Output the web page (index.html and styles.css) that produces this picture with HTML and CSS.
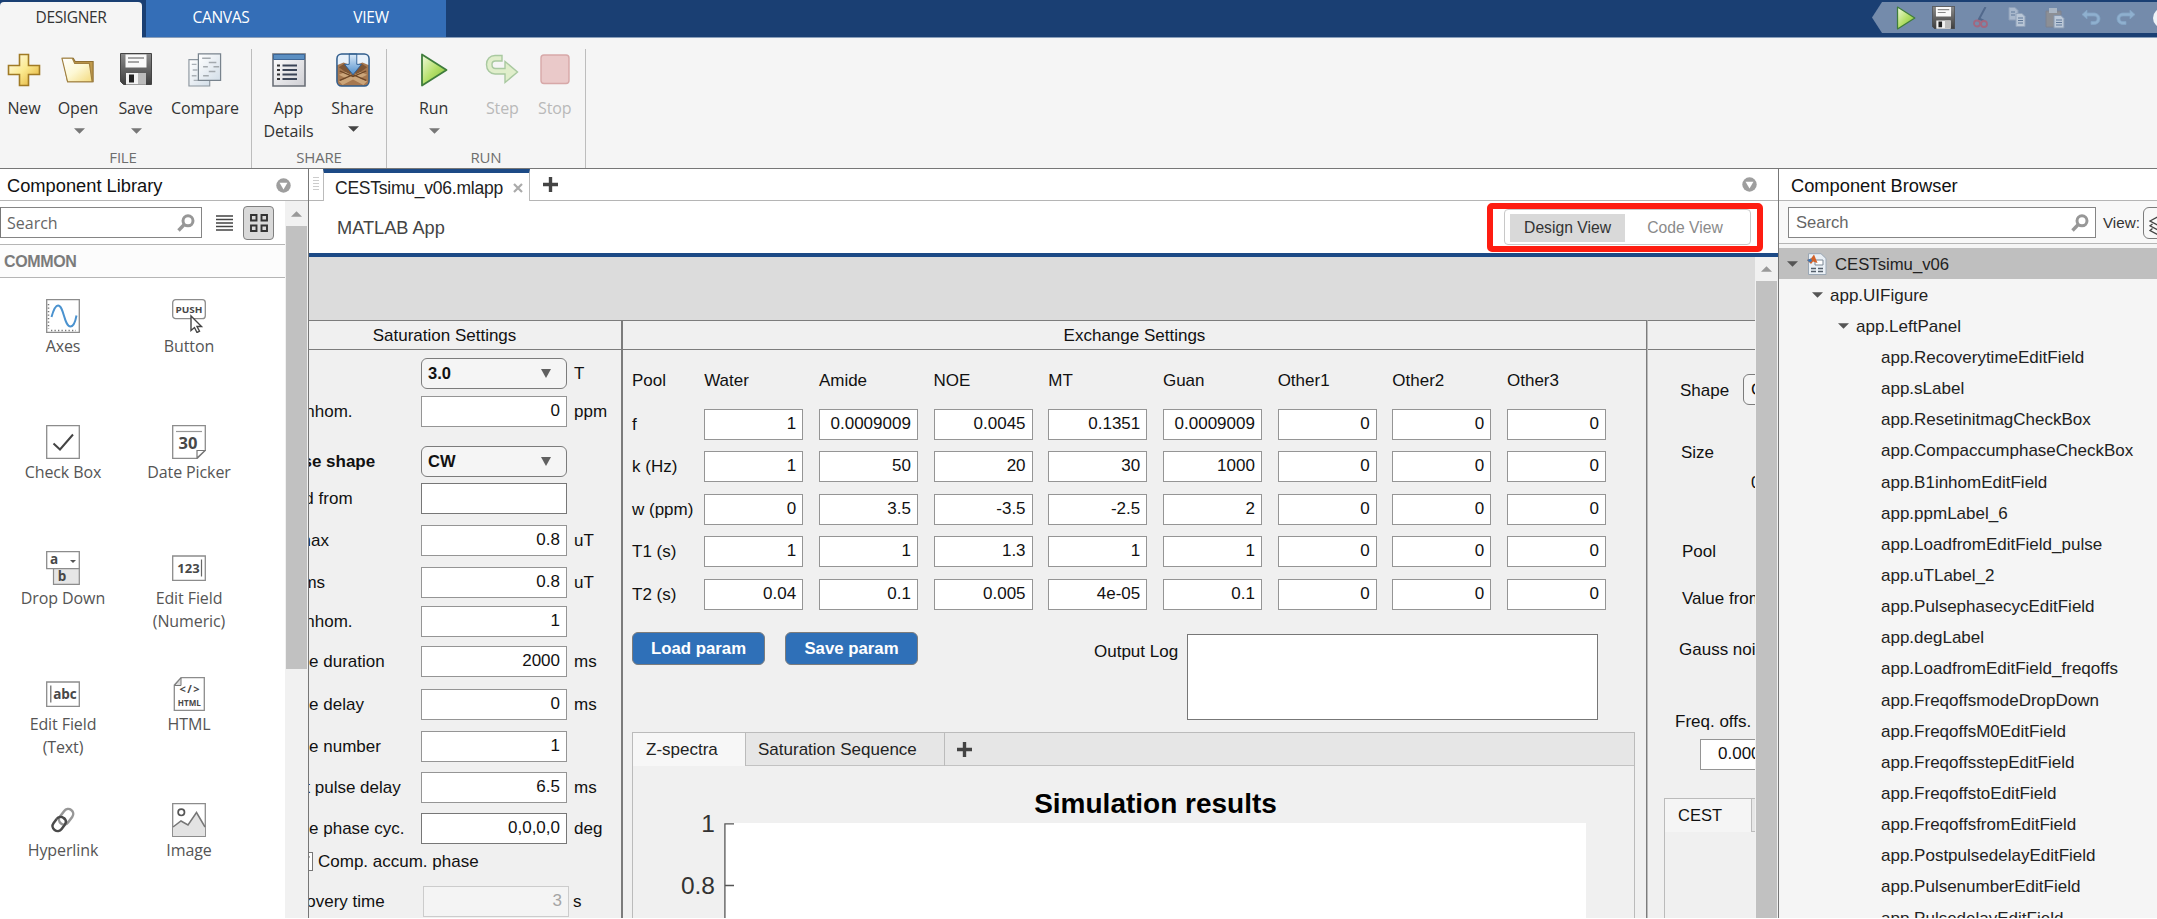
FILE: index.html
```html
<!DOCTYPE html>
<html lang="en">
<head>
<meta charset="utf-8">
<title>App Designer</title>
<link rel="stylesheet" href="styles.css">
</head>
<body>
<svg class="defs" width="0" height="0">
  <defs>
    <linearGradient id="gold" x1="0" y1="0" x2="1" y2="1"><stop offset="0" stop-color="#fffdf0"/><stop offset=".5" stop-color="#fbe98e"/><stop offset="1" stop-color="#dfa92c"/></linearGradient>
    <linearGradient id="folder" x1="0" y1="0" x2="1" y2="1"><stop offset="0" stop-color="#ffffff"/><stop offset=".5" stop-color="#fdf8d4"/><stop offset="1" stop-color="#f3d97c"/></linearGradient>
    <linearGradient id="steel" x1="0" y1="0" x2="0" y2="1"><stop offset="0" stop-color="#8b8b8b"/><stop offset="1" stop-color="#3e3e3e"/></linearGradient>
    <linearGradient id="green" x1="0" y1="0" x2="1" y2="1"><stop offset="0" stop-color="#f2fadf"/><stop offset=".5" stop-color="#b5e06b"/><stop offset="1" stop-color="#7dbb30"/></linearGradient>
    <linearGradient id="paper" x1="0" y1="0" x2="1" y2="1"><stop offset="0" stop-color="#ffffff"/><stop offset="1" stop-color="#d3dee8"/></linearGradient>
    <linearGradient id="sky" x1="0" y1="0" x2="0" y2="1"><stop offset="0" stop-color="#dcebf9"/><stop offset="1" stop-color="#4f8ecb"/></linearGradient>
    <linearGradient id="silver" x1="0" y1="0" x2="1" y2="1"><stop offset="0" stop-color="#ffffff"/><stop offset="1" stop-color="#cfcfd4"/></linearGradient>
    <symbol id="run" viewBox="0 0 28 34"><path d="M2 1.500 26.500 17 2 32.500z" fill="url(#green)" stroke="#3f7d3c" stroke-width="1.800" stroke-linejoin="round"/></symbol>
    <symbol id="save" viewBox="0 0 32 32"><path d="M.5.5h31v31H3.500l-3-3z" fill="url(#steel)" stroke="#444"/><path d="M5.500 1.500h21v13h-21z" fill="#fafafa"/><path d="M8 5h16M8 9h11" stroke="#8a8a8a" stroke-width="1.500"/><path d="M6 20h20v11.500H6z" fill="#f2f2f2"/><path d="M9 21.500h5v8H9z" fill="#222"/><path d="M18 20h8v11h-8z" fill="#bbb"/></symbol>
    <symbol id="lens" viewBox="0 0 18 18"><circle cx="11" cy="6.800" r="5" fill="none" stroke="#979797" stroke-width="3"/><path d="M7.500 10.300 1.500 16.500" stroke="#979797" stroke-width="3.400"/></symbol>
    <symbol id="menu" viewBox="0 0 16 16"><circle cx="8" cy="8" r="7.700" fill="#9e9e9e"/><path d="M3.800 5h8.400L8 12.300z" fill="#fff"/></symbol>
    <symbol id="plus" viewBox="0 0 16 16"><path d="M8 0v16M0 8h16" stroke="#444" stroke-width="3.600"/></symbol>
    <symbol id="down" viewBox="0 0 12 6"><path d="M0 0h12L6 6z"/></symbol>
  </defs>
</svg>
<div class="window">
  <header class="tabbar">
    <div class="tab tab-active">DESIGNER</div>
    <div class="tab-group"><div class="tab tab-canvas">CANVAS</div><div class="tab tab-view">VIEW</div></div>
    <div class="quick">
      <svg class="q q-run"><use href="#run"/></svg>
      <svg class="q q-save"><use href="#save"/></svg>
      <svg class="q q-cut" viewBox="0 0 16 22"><path d="M12.500 0 5.500 13M7 12l4 2" stroke="#52698c" stroke-width="2" fill="none"/><circle cx="4" cy="16.500" r="3" fill="none" stroke="#a2677f" stroke-width="1.800"/><circle cx="11" cy="17" r="3" fill="none" stroke="#a2677f" stroke-width="1.800"/></svg>
      <svg class="q q-copy" viewBox="0 0 18 21"><path d="M1 .5h6l3 3V13H1z" fill="#a9b8cc" stroke="#8d9fb8"/><path d="M3 5h4M3 8h4" stroke="#5f7899"/><path d="M8 6.500h6l3 3v10H8z" fill="#b9c6d6" stroke="#90a2ba"/><path d="M10 11h5M10 13.500h5M10 16h5" stroke="#5f7899"/></svg>
      <svg class="q q-paste" viewBox="0 0 20 22"><path d="M1 4h15v16H1z" fill="#8c8f95" stroke="#7c8290"/><path d="M4 1h8v5H4z" fill="#aab6c4"/><path d="M9 8.500h7l3 3v9.500H9z" fill="#bcc9d9" stroke="#8799b1"/><path d="M11 13h6M11 15.500h6M11 18h6" stroke="#5f7899"/></svg>
      <svg class="q q-undo" viewBox="0 0 20 17"><path d="M1 5.500 6 1v3h7c3.500 0 6 2.500 6 5.700S16.500 15.500 13 15.500H10v-3h3c2 0 3-1 3-2.800S15 7 13 7H6v3z" fill="#8fb0cf" stroke="#83a3c4" stroke-width=".8"/></svg>
      <svg class="q q-redo" viewBox="0 0 20 17"><path d="M19 5.500 14 1v3H7c-3.500 0-6 2.500-6 5.700S3.500 15.500 7 15.500h3v-3H7c-2 0-3-1-3-2.800S5 7 7 7h7v3z" fill="#8fb0cf" stroke="#83a3c4" stroke-width=".8"/></svg>
      <svg class="q q-help" viewBox="0 0 20 20"><circle cx="10" cy="10" r="10" fill="#eef3f8"/></svg>
    </div>
  </header>

  <section class="strip">
    <div class="group g-file">
      <div class="tools">
        <div class="tool t-new"><svg viewBox="0 0 34 34"><path d="M12.500 1.500h9v11h11v9h-11v11h-9v-11h-11v-9h11z" fill="url(#gold)" stroke="#a07a25" stroke-width="1.600"/></svg><span>New</span></div>
        <div class="tool t-open"><svg viewBox="0 0 36 34"><path d="M2 4.500h11l2 3.500h19v21.500H7z" fill="#c09a4c" stroke="#8f6f31" stroke-width="1.200"/><path d="M1 4.500h11l2.500 5.500h15.500l3 19.500H7z" fill="url(#folder)" stroke="#a08040" stroke-width="1.200"/></svg><span>Open</span><svg class="caret"><use href="#down"/></svg></div>
        <div class="tool t-save"><svg><use href="#save"/></svg><span>Save</span><svg class="caret"><use href="#down"/></svg></div>
        <div class="tool t-compare"><svg viewBox="0 0 36 36"><path d="M1 7h22v28H1z" fill="url(#paper)" stroke="#8b959e" stroke-width="1.200"/><path d="M4 12h5M5 18h5M4 24h5M6 29h6" stroke="#a9b0b6" stroke-width="1.500"/><path d="M11 1h23.500v28H11z" fill="url(#paper)" stroke="#78838d" stroke-width="1.300"/><path d="M15 5.500h9M22 10h8M27 14.500h6M16 14.500h5M22 19.500h7M16 24h6" stroke="#a3a9ae" stroke-width="1.600"/></svg><span>Compare</span></div>
      </div>
      <div class="caption">FILE</div>
    </div>
    <div class="group g-share">
      <div class="tools">
        <div class="tool t-details"><svg viewBox="0 0 34 34"><path d="M1 1h32v32H1z" fill="url(#silver)" stroke="#6b7078" stroke-width="1.600"/><path d="M1.500 1.500h31v5h-31z" fill="#5b8fc2" stroke="#3e6797"/><path d="M5 12.500h3M5 17h3M5 21.500h3M5 26h3" stroke="#333" stroke-width="2.200"/><path d="M10.500 12.500H25M10.500 17H25M10.500 21.500H25M10.500 26H25" stroke="#3a4456" stroke-width="2"/></svg><span>App<br>Details</span></div>
        <div class="tool t-share"><svg viewBox="0 0 36 36"><rect x="1" y="1" width="34" height="34" rx="5" fill="#e8f1fa"/><path d="M1 13 8 10l10 4 10-4 7 3v17a5 5 0 0 1-5 5H6a5 5 0 0 1-5-5z" fill="#a67850"/><path d="m3 15 6-4 9 8-4 4zM33 15l-6-4-9 8 4 4z" fill="#7d5636"/><path d="m3 23 7-3 8 4 8-4 7 3-8 4 8 3-4 4-11-6-11 6-4-4 8-3z" fill="#cba57a"/><path d="m4 19 14 6 14-6M4 29l14-6 14 6" fill="none" stroke="#6b4526" stroke-width="1.300"/><path d="M14 1h8v11h5l-9 11-9-11h5z" fill="url(#sky)" stroke="#2d5f96"/><rect x="1" y="1" width="34" height="34" rx="5" fill="none" stroke="#2f5c8c" stroke-width="1.600"/></svg><span>Share</span><svg class="caret dark"><use href="#down"/></svg></div>
      </div>
      <div class="caption">SHARE</div>
    </div>
    <div class="group g-run">
      <div class="tools">
        <div class="tool t-run"><svg><use href="#run"/></svg><span>Run</span><svg class="caret"><use href="#down"/></svg></div>
        <div class="tool t-step off"><svg viewBox="0 0 34 32"><path d="M17 1.500H10C5 1.500 1.500 5 1.500 10.500S5 20 10 20h10v8.500L32.500 18 20 7.500v7H10.500c-2 0-3.500-1.500-3.500-4S8.500 7 10.500 7H17z" fill="#e0eecb" stroke="#a9c9a0" stroke-width="1.400"/></svg><span>Step</span></div>
        <div class="tool t-stop off"><svg viewBox="0 0 30 31"><rect x="1" y="1" width="28" height="28.500" rx="3" fill="#eac9c9" stroke="#d7a8a8" stroke-width="1.400"/></svg><span>Stop</span></div>
      </div>
      <div class="caption">RUN</div>
    </div>
  </section>

  <main class="work">
    <aside class="library">
      <div class="panel-head"><span>Component Library</span><svg class="menu"><use href="#menu"/></svg></div>
      <div class="lib-body">
        <div class="lib-main">
          <div class="lib-search">
            <div class="search"><span>Search</span><svg><use href="#lens"/></svg></div>
            <svg class="list" viewBox="0 0 17 16"><path d="M0 1h17M0 4.500h17M0 8h17M0 11.500h17M0 15h17" stroke="#444" stroke-width="1.700"/></svg>
            <div class="grid-btn"><svg viewBox="0 0 18 18"><path d="M1 1h5.500v5.500H1zM11.500 1H17v5.500h-5.500zM1 11.500h5.500V17H1zM11.500 11.500H17V17h-5.500z" fill="none" stroke="#333" stroke-width="1.900"/></svg></div>
          </div>
          <div class="lib-cat">COMMON</div>
          <div class="lib-grid">
            <div class="item"><svg viewBox="0 0 34 34"><path d="M.7.7h32.600v32.600H.7z" fill="#fff" stroke="#8c8c8c" stroke-width="1.300"/><path d="M2.500 5v25M5 31.500h25" stroke="#777" stroke-width="1.500" stroke-dasharray="1.300 2.200"/><path d="M5.500 18C8 9 10 6.500 12 6.500c6 0 6 21 12.500 21 3 0 4.500-3 6-11" fill="none" stroke="#4a92cf" stroke-width="2"/></svg><span>Axes</span></div>
            <div class="item"><svg viewBox="0 0 34 34"><rect x=".7" y=".7" width="32.600" height="19" rx="3" fill="#fff" stroke="#8c8c8c" stroke-width="1.300"/><text x="17" y="14" class="ico-text" font-size="9.500" textLength="27" lengthAdjust="spacingAndGlyphs">PUSH</text><path d="M19 17v14.500l3.500-3 2.500 5 2.500-1.200-2.500-4.800h4.500z" fill="#fff" stroke="#444" stroke-width="1.400"/></svg><span>Button</span></div>
            <div class="item"><svg viewBox="0 0 34 34"><path d="M.7.7h32.600v32.600H.7z" fill="#fff" stroke="#8c8c8c" stroke-width="1.300"/><path d="m7.500 18.500 6.500 6L27 9.500" fill="none" stroke="#444" stroke-width="2"/></svg><span>Check Box</span></div>
            <div class="item"><svg viewBox="0 0 34 34"><path d="M.7.7h32.600v24.600l-8 8H.7z" fill="#fff" stroke="#8c8c8c" stroke-width="1.300"/><path d="M4 6.500h26" stroke="#999" stroke-width="1.200"/><text x="16" y="24" class="ico-text" font-size="16.500">30</text><path d="M25 33v-7.500h8z" fill="#fff" stroke="#777" stroke-width="1.200"/></svg><span>Date Picker</span></div>
            <div class="item"><svg viewBox="0 0 34 34"><path d="M7.500 17.500h25.800v15.800H7.500z" fill="#e6e6e6" stroke="#8c8c8c" stroke-width="1.200"/><path d="M.7.7h32.600v17H.7z" fill="#fff" stroke="#8c8c8c" stroke-width="1.300"/><text x="8" y="12.500" class="ico-text" font-size="13.500">a</text><text x="16" y="30" class="ico-text" font-size="13.500">b</text><path d="M24 9h6l-3 3z" fill="#555"/></svg><span>Drop Down</span></div>
            <div class="item"><svg viewBox="0 0 34 34"><path d="M.7 5h32.600v24.300H.7z" fill="#fff" stroke="#8c8c8c" stroke-width="1.300"/><text x="16.500" y="21.500" class="ico-text" font-size="13">123</text><path d="M29.500 8.500v17" stroke="#666" stroke-width="1.200"/></svg><span>Edit Field<br>(Numeric)</span></div>
            <div class="item"><svg viewBox="0 0 34 34"><path d="M.7 5h32.600v24.300H.7z" fill="#fff" stroke="#8c8c8c" stroke-width="1.300"/><text x="19" y="21.500" class="ico-text" font-size="13.500">abc</text><path d="M4.800 8.500v17" stroke="#666" stroke-width="1.200"/></svg><span>Edit Field<br>(Text)</span></div>
            <div class="item"><svg viewBox="0 0 34 34"><path d="M9 .7h23.300v32.600H2.300V8z" fill="#fff" stroke="#8c8c8c" stroke-width="1.300"/><path d="M9 1v7.500H2.500z" fill="#ddd" stroke="#777"/><text x="17.500" y="15.500" class="ico-text" font-size="11" textLength="20">&lt;/&gt;</text><text x="17.300" y="28.500" class="ico-text" font-size="9.500" textLength="23" lengthAdjust="spacingAndGlyphs">HTML</text></svg><span>HTML</span></div>
            <div class="item"><svg viewBox="0 0 34 34"><g fill="none" stroke-width="2.500" transform="rotate(-53 17 17)"><rect x="13" y="12.500" width="17" height="10" rx="5" stroke="#979797"/><path d="M19 18.500c0 3-2 4.800-5 4.800H9c-3 0-5-2-5-5s2-5 5-5h5" transform="translate(0 -2)" stroke="#4a4a4a"/><path d="M14 11.300c3 0 5 2.500 5 5v2" stroke="#4a4a4a"/></g></svg><span>Hyperlink</span></div>
            <div class="item"><svg viewBox="0 0 34 34"><path d="M.7.7h32.600v32.600H.7z" fill="#fff" stroke="#8c8c8c" stroke-width="1.300"/><path d="m1 24 8-6 7 4L24.500 9.500 33 24v9H1z" fill="#e3e3e3"/><path d="m1 24 8-6 7 4L24.500 9.500 33 24" fill="none" stroke="#777" stroke-width="1.500"/><circle cx="9.300" cy="9.300" r="3.200" fill="none" stroke="#555" stroke-width="1.700"/></svg><span>Image</span></div>
          </div>
        </div>
        <div class="scroll"><svg><use href="#down"/></svg><div class="thumb lib-thumb"></div></div>
      </div>
    </aside>

    <section class="editor">
      <div class="doc-tabs">
        <div class="grip"><i></i></div>
        <div class="doc-tab"><span>CESTsimu_v06.mlapp</span><svg viewBox="0 0 10 10"><path d="m1 1 8 8M9 1 1 9" stroke="#aaa" stroke-width="2.200"/></svg></div>
        <div class="doc-rest"><svg class="plus"><use href="#plus"/></svg><svg class="menu"><use href="#menu"/></svg></div>
      </div>
      <div class="doc-bar">
        <span>MATLAB App</span>
        <div class="highlight"><div class="toggle"><div class="on">Design View</div><div class="alt">Code View</div></div></div>
      </div>
      <div class="canvas-wrap">
        <div class="canvas">
          <section class="pane sat">
            <h2>Saturation Settings</h2>
            <div class="sat-grid">
              <span></span><div class="drop"><b>3.0</b><i></i></div><span>T</span>
              <span>B0 inhom.</span><div class="field">0</div><span>ppm</span>
              <span class="strong">Pulse shape</span><div class="drop"><b>CW</b><i></i></div><span></span>
              <span>Load from</span><div class="field dk"></div><span></span>
              <span>B1max</span><div class="field">0.8</div><span>uT</span>
              <span>B1rms</span><div class="field">0.8</div><span>uT</span>
              <span>B1 inhom.</span><div class="field">1</div><span></span>
              <span>Pulse duration</span><div class="field">2000</div><span>ms</span>
              <span>Pulse delay</span><div class="field">0</div><span>ms</span>
              <span>Pulse number</span><div class="field">1</div><span></span>
              <span>Post pulse delay</span><div class="field">6.5</div><span>ms</span>
              <span>Pulse phase cyc.</span><div class="field dk">0,0,0,0</div><span>deg</span>
              <div class="check"><i><svg viewBox="0 0 12 12"><path d="m1 6 4 4L11 1" fill="none" stroke="#222" stroke-width="2"/></svg></i><span>Comp. accum. phase</span></div>
              <span>Recovery time</span><div class="field dis">3</div><span class="sec">s</span>
            </div>
          </section>
          <section class="pane exch">
            <h2>Exchange Settings</h2>
            <div class="pool">
              <span>Pool</span><span>Water</span><span>Amide</span><span>NOE</span><span>MT</span><span>Guan</span><span>Other1</span><span>Other2</span><span>Other3</span>
              <span>f</span><div class="field">1</div><div class="field">0.0009009</div><div class="field">0.0045</div><div class="field">0.1351</div><div class="field">0.0009009</div><div class="field">0</div><div class="field">0</div><div class="field">0</div>
              <span>k (Hz)</span><div class="field">1</div><div class="field">50</div><div class="field">20</div><div class="field">30</div><div class="field">1000</div><div class="field">0</div><div class="field">0</div><div class="field">0</div>
              <span>w (ppm)</span><div class="field">0</div><div class="field">3.5</div><div class="field">-3.5</div><div class="field">-2.5</div><div class="field">2</div><div class="field">0</div><div class="field">0</div><div class="field">0</div>
              <span>T1 (s)</span><div class="field">1</div><div class="field">1</div><div class="field">1.3</div><div class="field">1</div><div class="field">1</div><div class="field">0</div><div class="field">0</div><div class="field">0</div>
              <span>T2 (s)</span><div class="field">0.04</div><div class="field">0.1</div><div class="field">0.005</div><div class="field">4e-05</div><div class="field">0.1</div><div class="field">0</div><div class="field">0</div><div class="field">0</div>
            </div>
            <div class="actions">
              <div class="btn">Load param</div><div class="btn">Save param</div>
              <span>Output Log</span><div class="log"></div>
            </div>
            <div class="tabs">
              <div class="tabs-head"><div class="tb tb-on">Z-spectra</div><div class="tb tb-seq">Saturation Sequence</div><svg class="plus"><use href="#plus"/></svg></div>
              <div class="chart">
                <div class="chart-title">Simulation results</div>
                <div class="chart-row">
                  <div class="ylabels"><span>1</span><span>0.8</span></div>
                  <div class="plot"><svg viewBox="0 0 12 100"><path d="M.9 100V.9H10M.9 62.500H10" fill="none" stroke="#555" stroke-width="1.300"/></svg></div>
                </div>
              </div>
            </div>
          </section>
          <section class="pane phantom">
            <h2></h2>
            <div class="ph">
              <div class="ph-shape"><span>Shape</span><div class="drop thin">C</div></div>
              <div class="ph-size">Size</div>
              <div class="ph-zero">0</div>
              <div class="ph-pool">Pool</div>
              <div class="ph-val">Value from</div>
              <div class="ph-noise">Gauss noise</div>
              <div class="ph-freq">Freq. offs.</div>
              <div class="field ph-field">0.0001</div>
              <div class="ph-tabs"><div class="ph-head"><div class="ph-tab">CEST</div></div></div>
            </div>
          </section>
        </div>
        <div class="scroll"><svg><use href="#down"/></svg><div class="thumb"></div></div>
      </div>
    </section>

    <aside class="browser">
      <div class="panel-head"><span>Component Browser</span></div>
      <div class="br-search">
        <div class="search"><span>Search</span><svg><use href="#lens"/></svg></div>
        <span class="view">View:</span>
        <div class="view-btn"><svg viewBox="0 0 22 20"><path d="m1 5 8-4.200 8 4.200-8 4.200zM3.500 8 1 9.800l8 4.200 8-4.200L14.500 8M3.500 12.500 1 14.500l8 4.200 8-4.200-2.500-2" fill="none" stroke="#444" stroke-width="1.300"/></svg></div>
      </div>
      <div class="tree">
        <div class="node root"><svg class="tw"><use href="#down"/></svg><svg class="app" viewBox="0 0 20 22"><path d="M1.500.7H14L19 5.500v16H1.500z" fill="#eaf0f6" stroke="#9aa7b4"/><path d="M8 7h8v5H8z" fill="#fff" stroke="#7b8794"/><path d="M4 15.500h5M11 15.500h5M4 18.500h5M11 18.500h5" stroke="#555f6b" stroke-width="1.600"/><path d="M0 7 4 5.500 7 1.500 10.500 10 6 8.500 4 11z" fill="#d2622a"/><path d="M0 7 4 5.500 5 8 3 9.500z" fill="#3a79b8"/></svg><span>CESTsimu_v06</span></div>
        <div class="node l1"><svg class="tw"><use href="#down"/></svg><span>app.UIFigure</span></div>
        <div class="node l2"><svg class="tw"><use href="#down"/></svg><span>app.LeftPanel</span></div>
        <div class="node">app.RecoverytimeEditField</div>
        <div class="node">app.sLabel</div>
        <div class="node">app.ResetinitmagCheckBox</div>
        <div class="node">app.CompaccumphaseCheckBox</div>
        <div class="node">app.B1inhomEditField</div>
        <div class="node">app.ppmLabel_6</div>
        <div class="node">app.LoadfromEditField_pulse</div>
        <div class="node">app.uTLabel_2</div>
        <div class="node">app.PulsephasecycEditField</div>
        <div class="node">app.degLabel</div>
        <div class="node">app.LoadfromEditField_freqoffs</div>
        <div class="node">app.FreqoffsmodeDropDown</div>
        <div class="node">app.FreqoffsM0EditField</div>
        <div class="node">app.FreqoffsstepEditField</div>
        <div class="node">app.FreqoffstoEditField</div>
        <div class="node">app.FreqoffsfromEditField</div>
        <div class="node">app.PostpulsedelayEditField</div>
        <div class="node">app.PulsenumberEditField</div>
        <div class="node">app.PulsedelayEditField</div>
      </div>
    </aside>
  </main>
</div>
</body>
</html>
```
FILE: styles.css
```css
* { box-sizing: border-box; }
html, body { margin: 0; overflow: hidden; background: #fff; }
body { font: 17px/22px "Liberation Sans", Arial, sans-serif; color: #111; white-space: nowrap; }
svg { display: block; flex: none; }
.defs { position: absolute; }
.window { width: 2157px; height: 918px; display: flex; flex-direction: column; overflow: hidden; background: #f5f5f5; }

/* top tab bar */
.tabbar { height: 38px; flex: none; display: flex; background: #1a3f73; border-bottom: 1px solid #8a9fba; font: 15.500px/22px "Open Sans", sans-serif; }
.tab { text-align: center; }
.tab-active { width: 142px; height: 37px; margin: 2px 4px 0 0; border-radius: 4px 4px 0 0; background: #f5f5f5; color: #333; line-height: 31px; letter-spacing: -.35px; }
.tab-group { display: flex; width: 300px; background: #346eb7; color: #fff; line-height: 35px; }
.tab-canvas { width: 150px; letter-spacing: -.3px; }
.tab-view { width: 150px; letter-spacing: -.3px; }
.quick { margin-left: auto; width: 285px; height: 31px; margin-top: 2px; display: flex; align-items: center; background: #748bab; clip-path: polygon(0 50%, 10px 0, 100% 0, 100% 100%, 10px 100%); padding-left: 23px; overflow: hidden; }
.q-run { width: 22px; height: 24px; margin-right: 15px; }
.q-save { width: 23px; height: 23px; margin-right: 18px; }
.q-cut { width: 16px; height: 22px; margin-right: 19px; }
.q-copy { width: 18px; height: 21px; margin-right: 19px; }
.q-paste { width: 20px; height: 22px; margin-right: 16px; }
.q-undo { width: 20px; height: 17px; margin-right: 15px; }
.q-redo { width: 20px; height: 17px; margin-right: 17px; }
.q-help { width: 20px; height: 20px; }

/* tool strip */
.strip { height: 131px; flex: none; display: flex; background: #f5f5f5; border-bottom: 1.500px solid #777; font: 16px/22px "Open Sans", sans-serif; color: #333; letter-spacing: -.1px; }
.group { display: flex; flex-direction: column; border-right: 1px solid #bdbdbd; margin-top: 11px; }
.g-file { width: 252px; }
.g-share { width: 135px; }
.g-run { width: 199px; }
.tools { display: flex; height: 98px; }
.tool { display: flex; flex-direction: column; align-items: center; padding-top: 4px; }
.tool > svg { width: 34px; height: 34px; margin-bottom: 10px; }
.tool > svg.caret { width: 11px; height: 6px; margin: 8px 0 0 2px; fill: #777; }
.tool > svg.dark { fill: #444; margin-top: 6px; }
.tool span { text-align: center; line-height: 22.500px; }
.t-new { width: 48px; }
.t-open { width: 60px; }
.t-save { width: 55px; }
.t-save > svg:first-child { width: 32px; height: 32px; margin-bottom: 12px; }
.t-compare { width: 84px; }
.t-details { width: 73px; }
.t-share { width: 55px; }
.t-run { width: 94px; }
.t-step { width: 45px; }
.t-stop { width: 61px; }
.t-stop > svg { width: 30px; height: 31px; margin: 1px 0 12px; }
.off { color: #b9b9b9; }
.caption { text-align: center; font-size: 15px; line-height: 20px; color: #6e6e6e; letter-spacing: -.2px; }
.g-file .caption { padding-right: 5px; }

/* work area */
.work { flex: 1; min-height: 0; display: flex; }
.panel-head { height: 32px; flex: none; display: flex; align-items: center; background: #fff; border-bottom: 1px solid #b5b5b5; font-size: 18.300px; padding: 2px 0 0 7px; }
.menu { width: 15px; height: 15px; }
.search { height: 31px; display: flex; align-items: center; justify-content: space-between; border: 1px solid #858585; background: #fff; color: #666; }
.search svg { width: 18px; height: 18px; }
.scroll { width: 23px; flex: none; background: #f1f1f1; display: flex; flex-direction: column; align-items: center; }
.scroll svg { width: 11px; height: 6px; margin: 9px 0; fill: #999; transform: rotate(180deg); flex: none; }
.thumb { width: 21px; flex: 1; background: #c1c1c1; }

/* component library */
.library { width: 309px; flex: none; display: flex; flex-direction: column; background: #fff; border-right: 1.500px solid #777; }
.library .menu { margin: -1px 17px 0 auto; }
.lib-body { flex: 1; min-height: 0; display: flex; }
.lib-main { width: 285px; }
.lib-search { height: 44px; display: flex; align-items: center; border-bottom: 1px solid #b5b5b5; font: 16px "Open Sans", sans-serif; }
.lib-search .search { width: 202px; padding: 0 6px 0 6px; border-left-color: #777; }
.lib-search .list { width: 17px; height: 16px; margin: 1px 10px 0 14px; }
.grid-btn { width: 31px; height: 34px; border: 1px solid #808080; border-radius: 4px; background: #d9d9d9; display: flex; align-items: center; justify-content: center; }
.grid-btn svg { width: 18px; height: 18px; }
.lib-cat { height: 33px; border-bottom: 1px solid #b5b5b5; background: #fcfcfc; color: #7b7b7b; font-weight: bold; font-size: 16px; line-height: 33px; padding-left: 4px; letter-spacing: -.35px; }
.lib-grid { display: grid; grid-template-columns: 126px 126px; grid-auto-rows: 126px; padding-top: 21px; }
.lib-grid .item { display: flex; flex-direction: column; align-items: center; font: 16px/22.700px "Open Sans", sans-serif; letter-spacing: -.1px; color: #555; text-align: center; }
.item svg { width: 34px; height: 34px; margin-bottom: 2px; }
.ico-text { font-family: "Open Sans", sans-serif; font-weight: 700; text-anchor: middle; fill: #484848; letter-spacing: 0; }
.lib-thumb { flex: none; height: 443px; }
.lib-body .scroll svg { margin: 10px 0 9px; }

/* editor */
.editor { width: 1469px; flex: none; display: flex; flex-direction: column; background: #fff; }
.doc-tabs { height: 32px; flex: none; display: flex; }
.grip { width: 14px; border-bottom: 1px solid #b5b5b5; padding: 8px 0 0 4px; }
.grip i { display: block; width: 6px; height: 14px; background: repeating-linear-gradient(#ccc 0 1px, #fff 1px 3px); }
.doc-tab { width: 207px; display: flex; align-items: center; border: 1px solid #bbb; border-top: 4px solid #1c4a86; border-bottom: 0; padding: 1px 6px 0 11px; font-size: 17.500px; justify-content: space-between; color: #222; letter-spacing: -.23px; }
.doc-tab svg { width: 10px; height: 10px; }
.doc-rest { flex: 1; border-bottom: 1px solid #b5b5b5; display: flex; align-items: center; justify-content: space-between; padding: 0 21px 0 13px; }
.plus { width: 15px; height: 15px; }
.doc-bar { height: 56px; flex: none; display: flex; justify-content: space-between; border-bottom: 4px solid #1c4a86; font-size: 18.200px; line-height: 52px; color: #444; padding: 1px 15px 0 28px; }
.highlight { width: 276px; height: 49px; margin-top: 1px; border: 6px solid #fe1d11; border-radius: 5px; padding: 0 6px 0 11px; }
.toggle { height: 36px; border: 1px solid #c8c8c8; border-radius: 4px; display: flex; padding: 4px 5px; font-size: 15.700px; line-height: 28px; text-align: center; }
.on { width: 116px; height: 28px; background: #d9d9d9; color: #333; }
.alt { width: 121px; color: #8a8a8a; }
.canvas-wrap { flex: 1; min-height: 0; display: flex; }
.canvas { width: 1446px; display: flex; overflow: hidden; background: #dcdcdc; padding-top: 63px; }

/* design panes */
.pane { flex: none; background: #f0f0f0; border: 1px solid #7c7c7c; border-bottom: 0; overflow: hidden; }
.pane h2 { margin: 0; height: 29px; border-bottom: 1px solid #7c7c7c; font-size: 17px; font-weight: normal; line-height: 29px; text-align: center; }
.sat { width: 313px; border-left: 0; }
.sat h2 { padding-right: 41px; }
.exch { width: 1025px; }
.phantom { width: 200px; border-left-color: #bbb; }
.field { height: 31px; border: 1px solid #959595; background: #fff; text-align: right; padding-right: 6px; line-height: 27px; }
.dk { border-color: #777; }
.dis { border-color: #ccc; background: #f4f4f4; color: #a5a5a5; margin-left: 2px; margin-right: -2px; }
.drop { height: 31px; border: 1px solid #7c7c7c; border-radius: 6px; background: #f5f5f5; display: flex; align-items: center; justify-content: space-between; padding: 0 15px 1px 6px; }
.drop b { font-size: 16.500px; }
.drop i { border: 5.500px solid transparent; border-top: 9px solid #606060; border-bottom: 0; }

.sat-grid { display: grid; margin-left: -33px; padding-top: 8px; grid-template-columns: 145px 146px 60px; grid-template-rows: 38px 50px 37px 42px 42px 39px 40px 43px 42px 41px 41px 32px 41px 40px; }
.sat-grid > span { line-height: 32px; height: 32px; }
.sat-grid > span:nth-child(3n), .sat-grid > .sec { padding-left: 7px; }
.sat-grid > span.sec { padding-left: 6px; }
.strong { font-weight: bold; }
.sat-grid .check { grid-column: 1 / 4; grid-row: 13; display: flex; align-items: flex-start; padding-left: 18px; }
.check i { width: 19px; height: 19px; border: 1px solid #777; background: #fff; margin-top: 7px; padding: 2px; }
.check svg { width: 13px; height: 13px; }
.check span { margin-left: 5px; line-height: 33px; }
.sat-grid > .check + span { padding-left: 0; }

.pool { display: grid; grid-template-columns: 56.500px repeat(8, 99px); column-gap: 15.700px; grid-template-rows: 42.500px repeat(5, 42.500px); padding: 16px 0 0 9px; line-height: 31px; }
.pool > span:nth-child(-n+9) { line-height: 30px; }

.actions { display: flex; align-items: flex-start; padding: 11px 0 0 9px; height: 111px; }
.btn { width: 133px; height: 33px; margin-right: 20px; border: 1px solid #7c7c7c; border-radius: 6px; background: #2f70b8; color: #fff; font-weight: bold; text-align: center; line-height: 31px; font-size: 16.800px; }
.actions span { margin: 9px 10px 0 156px; width: 83px; }
.log { width: 411px; height: 86px; margin-top: 2px; border: 1px solid #777; background: #fff; }

.tabs { width: 1003px; height: 300px; margin-left: 9px; border: 1px solid #bbb; }
.tabs-head { height: 33px; display: flex; align-items: center; background: #e6e6e6; border-bottom: 1px solid #c2c2c2; color: #222; line-height: 33px; }
.tb { height: 33px; border-right: 1px solid #bbb; padding-left: 13px; }
.tb-on { width: 113px; background: #f7f7f7; }
.tb-seq { width: 199px; padding-left: 12px; }
.tabs-head .plus { margin-left: 12px; }
.chart-title { font-weight: bold; font-size: 28px; line-height: 32px; color: #000; text-align: center; padding: 22px 0 0 44px; }
.chart-row { display: flex; margin-top: 3px; }
.ylabels { width: 82px; font-size: 24.500px; color: #333; text-align: right; display: flex; flex-direction: column; line-height: 26px; gap: 36px; margin-top: -12px; }
.plot { margin-left: 9px; width: 862px; height: 100px; background: #fff; }
.plot svg { width: 12px; height: 100px; }

.ph { padding-left: 17px; display: flex; flex-direction: column; align-items: flex-start; height: 568px; }
.ph > * { flex: none; }
.ph-shape { display: flex; height: 31px; margin: 24px 0 0 15px; line-height: 33px; }
.ph-shape span { width: 63px; }
.thin { width: 100px; line-height: 27px; padding-left: 7px; }
.ph-size { margin: 37px 0 0 16px; }
.ph-zero { margin: 8px 0 0 86px; }
.ph-pool { margin: 47px 0 0 17px; }
.ph-val { margin: 25px 0 0 17px; }
.ph-noise { margin: 29px 0 0 14px; }
.ph-freq { margin: 50px 0 0 10px; }
.ph-field { margin: 6px 0 0 35px; width: 80px; text-align: left; padding-left: 17px; }
.ph-tabs { width: 180px; height: 160px; margin-top: 28px; margin-left: -1px; border: 1px solid #bbb; }
.ph-head { height: 33px; border-bottom: 1px solid #bbb; background: #e6e6e6; }
.ph-tab { width: 87px; height: 33px; border-right: 1px solid #bbb; background: #f5f5f5; padding-left: 13px; line-height: 33px; font-size: 16.500px; }

/* component browser */
.browser { flex: 1; min-width: 0; background: #f5f5f5; border-left: 1.500px solid #777; overflow: hidden; }
.browser .panel-head { padding-left: 12px; }
.br-search { height: 43px; display: flex; align-items: center; border-bottom: 1px solid #b5b5b5; padding: 1px 0 0 9px; background: #f8f8f8; }
.br-search .search { width: 308px; flex: none; font-size: 16.600px; padding: 0 6px 0 7px; }
.view { font-size: 15.200px; margin: 0 3px 0 7px; color: #333; }
.view-btn { width: 44px; height: 32px; flex: none; border: 1px solid #7c7c7c; border-radius: 6px; padding: 8px 0 0 5px; }
.view-btn svg { width: 22px; height: 20px; }
.tree { padding-top: 4px; }
.node { height: 31.150px; line-height: 31px; padding: 1px 0 0 102px; color: #222; display: flex; align-items: center; }
.tw { width: 11px; height: 6px; fill: #555; }
.root { background: #bfbfbf; padding-left: 8px; font-size: 16.700px; }
.root .app { width: 20px; height: 22px; margin: 0 8px 0 9px; }
.l1 { padding-left: 33px; }
.l2 { padding-left: 59px; }
.l1 .tw, .l2 .tw { margin-right: 7px; }
```
